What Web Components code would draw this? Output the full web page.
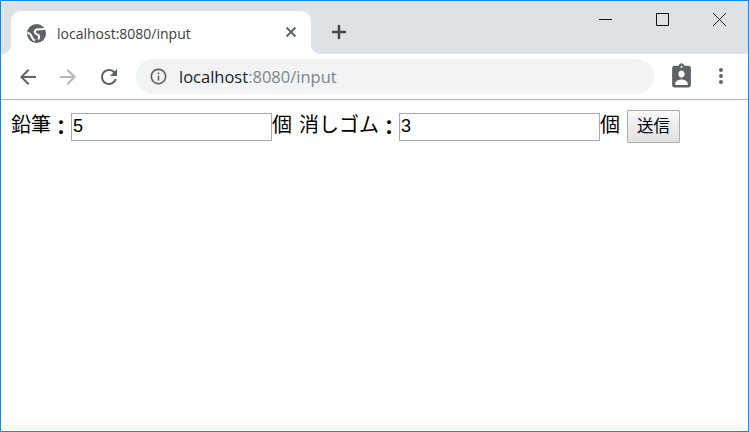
<!DOCTYPE html>
<html lang="ja">
<head>
<meta charset="utf-8">
<title>localhost:8080/input</title>
<style>
  html, body { margin: 0; background: #fff; }
</style>
</head>
<body>
<chrome-window>
  <tab-strip>
    <browser-tab>localhost:8080/input</browser-tab>
  </tab-strip>
  <tool-bar>
    <omni-box><b>localhost</b>:8080/input</omni-box>
  </tool-bar>
  <order-form></order-form>
</chrome-window>
<script>
const icon = (d, size, color) => `<svg width="${size}" height="${size}" viewBox="0 0 24 24" fill="${color}"><path d="${d}"/></svg>`;
const ICONS = {
  back: "M20 11H7.83l5.59-5.59L12 4l-8 8 8 8 1.41-1.41L7.83 13H20v-2z",
  forward: "M4 11h12.17l-5.59-5.59L12 4l8 8-8 8-1.41-1.41L16.17 13H4v-2z",
  reload: "M17.65 6.35C16.2 4.9 14.21 4 12 4c-4.42 0-7.99 3.58-7.99 8s3.57 8 7.99 8c3.73 0 6.84-2.55 7.73-6h-2.08c-.82 2.33-3.04 4-5.65 4-3.31 0-6-2.69-6-6s2.69-6 6-6c1.66 0 3.14.69 4.22 1.78L13 11h7V4l-2.35 2.35z",
  info: "M11 7h2v2h-2zm0 4h2v6h-2zm1-9C6.48 2 2 6.48 2 12s4.48 10 10 10 10-4.48 10-10S17.52 2 12 2zm0 18c-4.41 0-8-3.59-8-8s3.59-8 8-8 8 3.59 8 8-3.59 8-8 8z",
  badge: "M19 3h-4.18C14.4 1.84 13.3 1 12 1c-1.3 0-2.4.84-2.82 2H5c-1.1 0-2 .9-2 2v14c0 1.1.9 2 2 2h14c1.1 0 2-.9 2-2V5c0-1.1-.9-2-2-2zm-7 0c.55 0 1 .45 1 1s-.45 1-1 1-1-.45-1-1 .45-1 1-1zm0 4c1.66 0 3 1.34 3 3s-1.34 3-3 3-3-1.34-3-3 1.34-3 3-3zm6 12H6v-1.4c0-2 4-3.1 6-3.1s6 1.1 6 3.1V19z",
  dots: "M12 8c1.1 0 2-.9 2-2s-.9-2-2-2-2 .9-2 2 .9 2 2 2zm0 2c-1.1 0-2 .9-2 2s.9 2 2 2 2-.9 2-2-.9-2-2-2zm0 6c-1.1 0-2 .9-2 2s.9 2 2 2 2-.9 2-2-.9-2-2-2z"
};

customElements.define('chrome-window',
class extends HTMLElement {
  constructor() {
    super();
    this.attachShadow({ mode: 'open' });
    this.shadowRoot.innerHTML = `
      <style>
        :host {
          display: flex;
          flex-flow: column nowrap;
          box-sizing: border-box;
          width: 749px;
          height: 432px;
          border: 1px solid #0f8ae6;
          background: #fff;
          overflow: hidden;
        }
      </style>
      <slot></slot>
    `;
  }
});

customElements.define('tab-strip',
class extends HTMLElement {
  constructor() {
    super();
    this.attachShadow({ mode: 'open' });
    this.shadowRoot.innerHTML = `
      <style>
        :host {
          display: flex;
          flex-flow: row nowrap;
          height: 53px;
          box-sizing: border-box;
          padding: 10px 0 0 10px;
          background: #dee1e6;
        }
        .plus { margin: 12px 0 0 19px; width: 18px; height: 18px; }
        .controls { margin: -10px 0 0 auto; display: flex; }
        .controls svg { display: block; width: 57px; height: 38px; }
      </style>
      <slot></slot>
      <svg class="plus" viewBox="0 0 18 18" stroke="#44474b" stroke-width="2.4" fill="none"><path d="M9 2v14M2 9h14"/></svg>
      <div class="controls">
        <svg viewBox="0 0 57 38" stroke="#111" fill="none"><path d="M22 18.5h13"/></svg>
        <svg viewBox="0 0 57 38" stroke="#111" fill="none"><path d="M22.5 12.5h12v12h-12z"/></svg>
        <svg viewBox="0 0 57 38" stroke="#222" fill="none"><path d="M22 12l13 13M35 12l-13 13"/></svg>
      </div>
    `;
  }
});

customElements.define('browser-tab',
class extends HTMLElement {
  constructor() {
    super();
    this.attachShadow({ mode: 'open' });
    this.shadowRoot.innerHTML = `
      <style>
        :host {
          position: relative;
          display: flex;
          flex-flow: row nowrap;
          align-items: center;
          box-sizing: border-box;
          width: 300px;
          height: 43px;
          padding: 1px 0 0 16px;
          background: #fff;
          border-radius: 10px 10px 0 0;
          font: 14px "Open Sans", "Noto Sans", sans-serif;
          color: #3c4043;
        }
        .flare { position: absolute; bottom: 0; width: 10px; height: 10px; }
        .l { left: -10px; background: radial-gradient(circle at 0 0, transparent 10px, #fff 10.5px); }
        .r { right: -10px; background: radial-gradient(circle at 100% 0, transparent 10px, #fff 10.5px); }
        .fav { width: 19px; height: 19px; margin-right: 11px; flex: none; }
        .title { flex: 1; }
        .x { width: 12px; height: 12px; margin-right: 14px; margin-top: -2px; }
      </style>
      <i class="flare l"></i>
      <svg class="fav" viewBox="0 0 19 19">
        <circle cx="9.5" cy="9.5" r="9.5" fill="#5f6368"/>
        <path d="M18 4.500C14.500 6.500 10.500 4 8.300 6.300 6.800 8 8.300 10 10.300 10.500c2.700.6 2 3 .9 5" fill="none" stroke="#fff" stroke-width="2"/>
        <path d="M.5 9C3 9 4 10.800 4.800 13c.5 1.500 1.700 2.700 3.200 3.500" fill="none" stroke="#fff" stroke-width="2"/>
      </svg>
      <span class="title"><slot></slot></span>
      <svg class="x" viewBox="0 0 12 12" stroke="#5f6368" stroke-width="2" fill="none"><path d="M1.5 1.5l9 9M10.5 1.5l-9 9"/></svg>
      <i class="flare r"></i>
    `;
  }
});

customElements.define('tool-bar',
class extends HTMLElement {
  constructor() {
    super();
    this.attachShadow({ mode: 'open' });
    this.shadowRoot.innerHTML = `
      <style>
        :host {
          display: flex;
          flex-flow: row nowrap;
          align-items: flex-start;
          box-sizing: border-box;
          height: 46px;
          padding: 5px 0 0 15px;
          background: #fff;
          border-bottom: 1px solid #b4b4b4;
        }
        svg { display: block; flex: none; }
        .back { margin-top: 6px; }
        .fwd { margin: 6px 0 0 16px; }
        .rel { margin: 6px 15px 0 17px; }
        .badge { margin: 3px 0 0 15px; }
        .badge svg { width: 25px; height: 29px; }
        .dots { margin: 5px 0 0 15px; }
      </style>
      <span class="back">${icon(ICONS.back, 24, '#5f6368')}</span>
      <span class="fwd">${icon(ICONS.forward, 24, '#b5b7ba')}</span>
      <span class="rel">${icon(ICONS.reload, 24, '#5f6368')}</span>
      <slot></slot>
      <span class="badge"><svg viewBox="0 0 24 24" preserveAspectRatio="none" fill="#5f6368"><path d="${ICONS.badge}"/></svg></span>
      <span class="dots">${icon(ICONS.dots, 24, '#5f6368')}</span>
    `;
  }
});

customElements.define('omni-box',
class extends HTMLElement {
  constructor() {
    super();
    this.attachShadow({ mode: 'open' });
    this.shadowRoot.innerHTML = `
      <style>
        :host {
          display: flex;
          flex-flow: row nowrap;
          align-items: center;
          gap: 11px;
          box-sizing: border-box;
          width: 518px;
          height: 35px;
          padding-left: 13px;
          background: #f1f3f4;
          border-radius: 18px;
          font: 16.5px "Open Sans", "Noto Sans", sans-serif;
          color: #80868b;
        }
        svg { display: block; }
        ::slotted(b) { font-weight: 400; color: #202124; }
      </style>
      ${icon(ICONS.info, 19, '#5f6368')}
      <span><slot></slot></span>
    `;
  }
});

customElements.define('order-form',
class extends HTMLElement {
  constructor() {
    super();
    this.attachShadow({ mode: 'open' });
    this.shadowRoot.innerHTML = `
      <style>
        :host {
          display: flex;
          flex-flow: row nowrap;
          align-items: flex-start;
          padding: 10px 0 0 10px;
          font: 20px "Liberation Sans", "Noto Sans CJK JP", sans-serif;
          color: #000;
        }
        span { line-height: 31px; white-space: pre; }
        /* the fullwidth colon sits too high in this font */
        i { display: inline-block; font-style: normal; font-weight: 700; transform: translateY(3px); }
        input {
          box-sizing: border-box;
          width: 201px;
          height: 28px;
          margin: 3px 0 0;
          padding: 0 2px 2px 1px;
          border: 1px solid #a9a9a9;
          border-radius: 0;
          outline: none;
          font: 18px "Liberation Sans", sans-serif;
          color: #000;
          background: #fff;
        }
        button {
          box-sizing: border-box;
          width: 53px;
          height: 33px;
          margin: 0 0 0 7px;
          padding: 0 0 3px;
          border: 1px solid #adadad;
          border-radius: 1px;
          background: linear-gradient(#f8f8f8, #e1e1e1);
          font: 16.5px "Liberation Sans", "Noto Sans CJK JP", sans-serif;
          color: #000;
        }
      </style>
      <span>鉛筆<i>：</i></span><input type="text" value="5"><span>個</span>
      <span style="margin-left:7px">消しゴム<i>：</i></span><input type="text" value="3"><span>個</span>
      <button type="button">送信</button>
    `;
  }
});
</script>
</body>
</html>
